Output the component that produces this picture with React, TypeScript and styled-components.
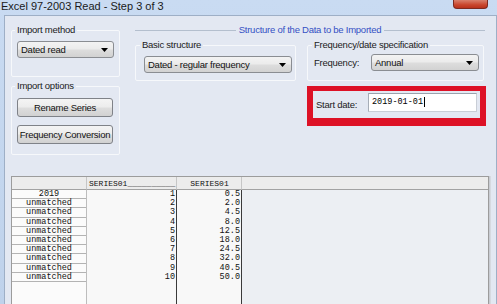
import React from 'react';
import styled, { createGlobalStyle } from 'styled-components';

const GlobalStyle = createGlobalStyle`
  html, body {
    margin: 0;
    padding: 0;
    background: #c3d5ec;
  }
  body {
    font-family: "Liberation Sans", Arial, sans-serif;
    font-size: 9.5px;
    letter-spacing: -0.25px;
    color: #1b1b1b;
  }
`;

const gridFont = `"Liberation Mono", "Courier New", monospace`;

const Window = styled.div`
  width: 497px;
  height: 304px;
  overflow: hidden;
  display: flex;
  flex-direction: column;
  background: linear-gradient(#c9dbf2, #bfd2eb);
`;

const TitleBar = styled.div`
  height: 15px;
  flex: none;
  display: flex;
  justify-content: space-between;
  align-items: flex-start;
`;

const Title = styled.div`
  font-size: 11px;
  line-height: 12px;
  letter-spacing: 0;
  padding-left: 1px;
  color: #1a1a1a;
  white-space: nowrap;
`;

const CloseButton = styled.div`
  width: 33px;
  height: 8px;
  margin-right: 9px;
  border: 1px solid #7d2a1f;
  border-top: none;
  border-radius: 0 0 4px 4px;
  background: linear-gradient(#d8806c, #c9462d 60%, #b8321c);
`;

const Content = styled.div`
  flex: 1;
  margin-left: 4px;
  width: 485px;
  border: 1px solid #9eafc6;
  border-bottom: none;
  background: #e3e8f2;
  padding: 8px 0 0 6px;
  display: flex;
  flex-direction: column;
`;

const TopSection = styled.div`
  display: flex;
  align-items: flex-start;
`;

const LeftColumn = styled.div`
  width: 109px;
  display: flex;
  flex-direction: column;
  gap: 3px;
`;

const Group = styled.fieldset<{ $h: number; $w?: number; $pl?: number }>`
  box-sizing: border-box;
  margin: 0;
  width: ${(p) => (p.$w ? `${p.$w}px` : '100%')};
  height: ${(p) => p.$h}px;
  padding: 0 4px 0 ${(p) => p.$pl ?? 5}px;
  border: 1px solid #f6f8fb;
  border-radius: 2px;
  min-width: 0;
`;

const GroupLabel = styled.legend<{ $ml?: number }>`
  padding: 0 2px;
  margin-left: ${(p) => p.$ml ?? -2}px;
  line-height: 12px;
  color: #1b1b1b;
  white-space: nowrap;
`;

const Combo = styled.div<{ $w: number }>`
  box-sizing: border-box;
  width: ${(p) => p.$w}px;
  height: 17px;
  border: 1px solid #8a8d92;
  border-radius: 3px;
  background: linear-gradient(#f3f3f3, #ebebeb 48%, #dddddd 52%, #d2d2d2);
  display: flex;
  align-items: center;
  justify-content: space-between;
  padding: 0 5px 0 3px;
  color: #111;
  white-space: nowrap;
`;

const Button = styled.div`
  box-sizing: border-box;
  width: 96px;
  height: 19px;
  border: 1px solid #7f8288;
  border-radius: 3px;
  background: linear-gradient(#f4f4f4, #ececec 48%, #dedede 52%, #d1d1d1);
  display: flex;
  align-items: center;
  justify-content: center;
  color: #111;
  white-space: nowrap;
`;

const ButtonStack = styled.div`
  display: flex;
  flex-direction: column;
  gap: 8px;
  margin-top: 6px;
`;

const RightColumn = styled.div`
  margin-left: 15px;
  width: 350px;
  display: flex;
  flex-direction: column;
`;

const Structure = styled.fieldset`
  margin: 0;
  padding: 0;
  border: none;
  border-top: 1px solid #b4bfce;
  min-width: 0;
`;

const StructureLabel = styled.legend`
  margin: 0 auto;
  padding: 0 3px;
  line-height: 12px;
  color: #3450c4;
  white-space: nowrap;
`;

const SubGroups = styled.div`
  display: flex;
  gap: 11px;
  margin-top: 3px;
`;

const Row = styled.div<{ $mt?: number }>`
  display: flex;
  align-items: center;
  justify-content: space-between;
  margin-top: ${(p) => p.$mt ?? 0}px;
`;

const FieldLabel = styled.span`
  white-space: nowrap;
`;

const Highlight = styled.div`
  align-self: flex-end;
  margin-top: 5px;
  margin-right: -1px;
  box-sizing: border-box;
  width: 179px;
  height: 40px;
  border-style: solid;
  border-color: #dd1126;
  border-width: 5px 6px 8px 6px;
  padding: 2px 3px 0 3px;
  display: flex;
  align-items: flex-start;
  justify-content: space-between;
`;

const DateLabel = styled(FieldLabel)`
  margin-top: 6px;
`;

const DateInput = styled.div`
  box-sizing: border-box;
  width: 109px;
  height: 19px;
  background: #fff;
  border: 1px solid #c9ced6;
  border-top-color: #9aa2ad;
  border-left-color: #a6adb7;
  padding: 3px 0 0 3px;
  font-family: ${gridFont};
  font-size: 8.5px;
  letter-spacing: 0;
  line-height: 11px;
  color: #000;
  display: flex;
  align-items: flex-start;
`;

const Caret = styled.span`
  display: inline-block;
  width: 1px;
  height: 10px;
  background: #000;
  margin-left: 1px;
`;

const Grid = styled.div`
  flex: 1;
  margin: 21px 7px 0 0;
  border: 1px solid #9c9c9c;
  border-bottom: none;
  box-shadow: 1px 0 0 #c9ccd2, 2px 0 0 #d6d9df;
  display: grid;
  grid-template-columns: 75px 90px 65px 1fr;
  grid-template-rows: 13px 1fr;
  font-family: ${gridFont};
  font-size: 8.5px;
  letter-spacing: 0;
  color: #111;
  background: #eceff3;
`;

const HeadCell = styled.div<{ $align?: string; $last?: boolean }>`
  background: #ececec;
  border-bottom: 1px solid #a2a2a2;
  border-right: ${(p) => (p.$last ? 'none' : '1px solid #c6c6c6')};
  font-size: 8px;
  line-height: 13px;
  padding: 0 1px 0 2px;
  text-align: ${(p) => p.$align ?? 'left'};
  white-space: nowrap;
  overflow: hidden;
`;

const LabelColumn = styled.div`
  background: #fbfbfb;
  border-right: 1px solid #bdbdbd;
  display: flex;
  flex-direction: column;
`;

const LabelCell = styled.div`
  height: 9.2px;
  line-height: 9px;
  box-sizing: border-box;
  border-bottom: 1px solid #b3b3b3;
  text-align: center;
  white-space: pre;
`;

const ValueColumn = styled.div`
  background: #f8f8f8;
  border-right: 1px solid #3a3a3a;
  display: flex;
  flex-direction: column;
`;

const ValueCell = styled.div`
  height: 9.2px;
  line-height: 9px;
  text-align: right;
  padding-right: 1px;
  white-space: pre;
`;

const EmptyColumn = styled.div`
  background: #eceff3;
`;

const Arrow = () => (
  <svg width="7" height="4" viewBox="0 0 7 4">
    <path d="M0 0h7L3.5 4z" fill="#000" />
  </svg>
);

const rows = [
  { label: '2019', n: '1', v: '0.5' },
  { label: 'unmatched', n: '2', v: '2.0' },
  { label: 'unmatched', n: '3', v: '4.5' },
  { label: 'unmatched', n: '4', v: '8.0' },
  { label: 'unmatched', n: '5', v: '12.5' },
  { label: 'unmatched', n: '6', v: '18.0' },
  { label: 'unmatched', n: '7', v: '24.5' },
  { label: 'unmatched', n: '8', v: '32.0' },
  { label: 'unmatched', n: '9', v: '40.5' },
  { label: 'unmatched', n: '10', v: '50.0' },
];

export default function App() {
  return (
    <>
      <GlobalStyle />
      <Window>
        <TitleBar>
          <Title>Excel 97-2003 Read - Step 3 of 3</Title>
          <CloseButton />
        </TitleBar>
        <Content>
          <TopSection>
            <LeftColumn>
              <Group $h={53}>
                <GroupLabel>Import method</GroupLabel>
                <Combo $w={97} style={{ marginTop: 5 }}>
                  Dated read
                  <Arrow />
                </Combo>
              </Group>
              <Group $h={75} $pl={5}>
                <GroupLabel>Import options</GroupLabel>
                <ButtonStack>
                  <Button>Rename Series</Button>
                  <Button>Frequency Conversion</Button>
                </ButtonStack>
              </Group>
            </LeftColumn>
            <RightColumn>
              <Structure>
                <StructureLabel>Structure of the Data to be Imported</StructureLabel>
                <SubGroups>
                  <Group $h={42} $w={161} $pl={8}>
                    <GroupLabel $ml={-4}>Basic structure</GroupLabel>
                    <Combo $w={148} style={{ marginTop: 5 }}>
                      Dated - regular frequency
                      <Arrow />
                    </Combo>
                  </Group>
                  <Group $h={42} $w={177} $pl={6}>
                    <GroupLabel>Frequency/date specification</GroupLabel>
                    <Row $mt={3}>
                      <FieldLabel>Frequency:</FieldLabel>
                      <Combo $w={108}>
                        Annual
                        <Arrow />
                      </Combo>
                    </Row>
                  </Group>
                </SubGroups>
              </Structure>
              <Highlight>
                <DateLabel>Start date:</DateLabel>
                <DateInput>
                  2019-01-01
                  <Caret />
                </DateInput>
              </Highlight>
            </RightColumn>
          </TopSection>
          <Grid>
            <HeadCell />
            <HeadCell>SERIES01__________</HeadCell>
            <HeadCell $align="center">SERIES01</HeadCell>
            <HeadCell $last />
            <LabelColumn>
              {rows.map((r, i) => (
                <LabelCell key={i}>{r.label}</LabelCell>
              ))}
            </LabelColumn>
            <ValueColumn>
              {rows.map((r, i) => (
                <ValueCell key={i}>{r.n}</ValueCell>
              ))}
            </ValueColumn>
            <ValueColumn>
              {rows.map((r, i) => (
                <ValueCell key={i}>{r.v}</ValueCell>
              ))}
            </ValueColumn>
            <EmptyColumn />
          </Grid>
        </Content>
      </Window>
    </>
  );
}
